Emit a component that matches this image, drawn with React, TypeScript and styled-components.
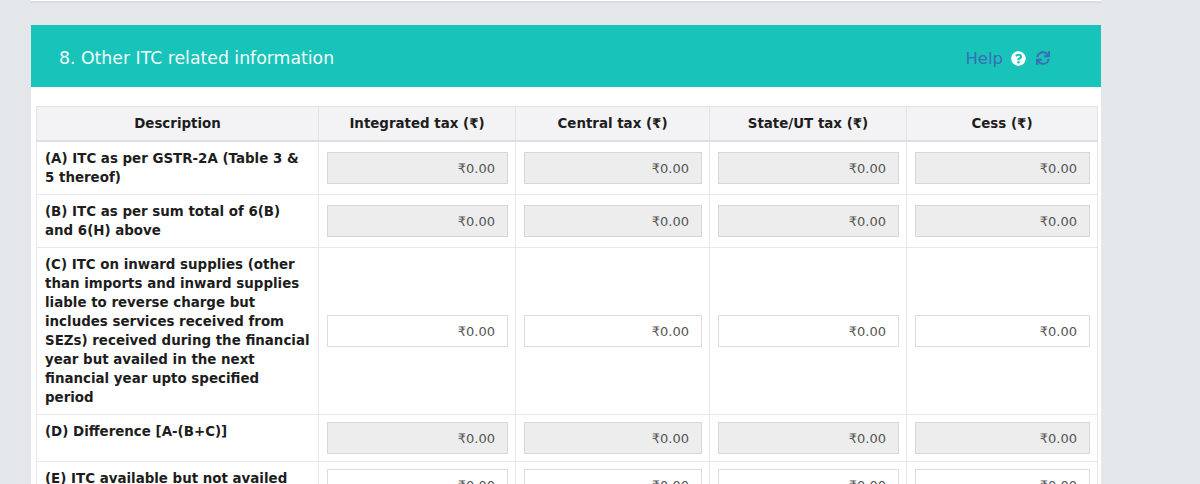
import React from "react";
import styled, { createGlobalStyle } from "styled-components";
import { FaQuestionCircle, FaSync } from "react-icons/fa";

const GlobalStyle = createGlobalStyle`
  body {
    margin: 0;
    background: #e4e7ea;
    font-family: "DejaVu Sans", Verdana, sans-serif;
    color: #222;
  }
`;

type Row = { label: string; disabled: boolean };

const columns = [
  { title: "Description", width: 282 },
  { title: "Integrated tax (₹)", width: 197 },
  { title: "Central tax (₹)", width: 194 },
  { title: "State/UT tax (₹)", width: 197 },
  { title: "Cess (₹)", width: 191 },
];

const rows: Row[] = [
  { label: "(A) ITC as per GSTR-2A (Table 3 & 5 thereof)", disabled: true },
  { label: "(B) ITC as per sum total of 6(B) and 6(H) above", disabled: true },
  {
    label:
      "(C) ITC on inward supplies (other than imports and inward supplies liable to reverse charge but includes services received from SEZs) received during the financial year but availed in the next financial year upto specified period",
    disabled: false,
  },
  { label: "(D) Difference [A-(B+C)]", disabled: true },
  { label: "(E) ITC available but not availed", disabled: false },
];

function App() {
  return (
    <Page>
      <GlobalStyle />
      <PrevCard />
      <Panel>
        <PanelHeader>
          <Title>8. Other ITC related information</Title>
          <HelpLinks>
            <HelpText>Help</HelpText>
            <FaQuestionCircle className="help" />
            <FaSync className="refresh" />
          </HelpLinks>
        </PanelHeader>
        <PanelBody>
          <Table>
            <colgroup>
              {columns.map((c) => (
                <col key={c.title} style={{ width: c.width }} />
              ))}
            </colgroup>
            <thead>
              <tr>
                {columns.map((c) => (
                  <Th key={c.title}>{c.title}</Th>
                ))}
              </tr>
            </thead>
            <tbody>
              {rows.map((r) => (
                <tr key={r.label}>
                  <DescCell>{r.label}</DescCell>
                  {[0, 1, 2, 3].map((i) => (
                    <ValueCell key={i}>
                      <AmountInput
                        type="text"
                        readOnly
                        value="₹0.00"
                        $disabled={r.disabled}
                      />
                    </ValueCell>
                  ))}
                </tr>
              ))}
            </tbody>
          </Table>
        </PanelBody>
      </Panel>
    </Page>
  );
}

export default App;

const Page = styled.div`
  width: 1070px;
  padding-left: 31px;
`;

const PrevCard = styled.div`
  height: 1px;
  background: #fff;
  border-bottom: 2px solid #d9dcdf;
  margin-bottom: 22px;
`;

const Panel = styled.div`
  background: #fff;
`;

const PanelHeader = styled.div`
  box-sizing: border-box;
  height: 62px;
  background: #18c3ba;
  display: flex;
  align-items: center;
  justify-content: space-between;
  padding: 4px 51px 0 28px;
`;

const Title = styled.h3`
  margin: 0;
  font-size: 17.3px;
  font-weight: normal;
  color: #f2fbfa;
`;

const HelpLinks = styled.div`
  display: flex;
  align-items: center;
  gap: 8px;
  color: #3b6db8;

  .help {
    color: #fff;
    font-size: 15px;
  }
  .refresh {
    color: #3b6db8;
    font-size: 14px;
    margin-left: 2px;
  }
`;

const HelpText = styled.span`
  font-size: 16.5px;
`;

const PanelBody = styled.div`
  padding: 19px 4px 0 5px;
`;

const Table = styled.table`
  width: 1061px;
  table-layout: fixed;
  border-collapse: collapse;
  font-size: 13.4px;
  line-height: 19px;
`;

const Th = styled.th`
  background: #f3f3f5;
  border: 1px solid #e3e3e5;
  border-bottom: 2px solid #dedee0;
  padding: 7px 8px;
  text-align: center;
  font-weight: bold;
  color: #1d1d1d;
`;

const DescCell = styled.td`
  border: 1px solid #e8e8e8;
  padding: 7px 8px;
  vertical-align: top;
  font-weight: bold;
  color: #1d1d1d;
`;

const ValueCell = styled.td`
  border: 1px solid #e8e8e8;
  padding: 7px 7px 7px 8px;
  vertical-align: middle;
`;

const AmountInput = styled.input<{ $disabled: boolean }>`
  display: block;
  box-sizing: border-box;
  width: 100%;
  height: 32px;
  padding: 6px 12px;
  border: 1px solid ${(p) => (p.$disabled ? "#d6d6d6" : "#dcdcdc")};
  background: ${(p) => (p.$disabled ? "#ededed" : "#fff")};
  font-family: "DejaVu Sans", Verdana, sans-serif;
  font-size: 13px;
  color: #555;
  text-align: right;
  outline: none;
`;
